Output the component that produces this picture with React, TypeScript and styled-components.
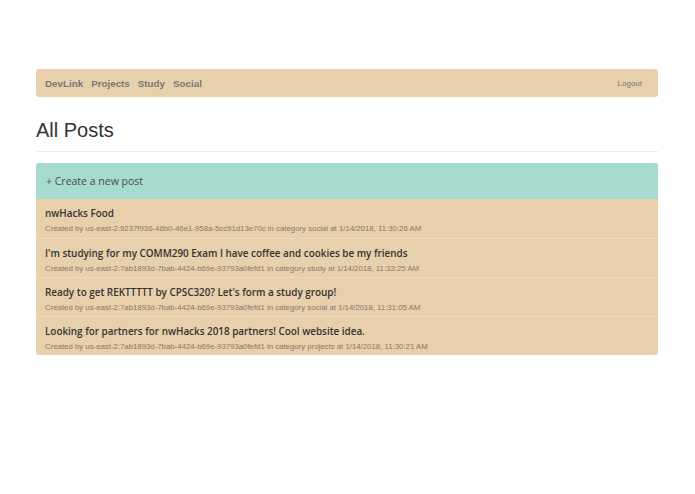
import React from "react";
import styled, { createGlobalStyle } from "styled-components";

const GlobalStyle = createGlobalStyle`
  body {
    margin: 0;
    background: #fff;
    font-family: "Liberation Sans", Arial, sans-serif;
    color: #333;
  }
`;

export const Page = styled.div`
  width: 622px;
  margin: 0 0 0 36px;
  padding-top: 69px;
`;

export const NavBar = styled.nav`
  display: flex;
  align-items: center;
  justify-content: space-between;
  height: 28px;
  padding: 0 16px 0 9px;
  background-color: #e8d0ac;
  border-radius: 3px;
  box-sizing: border-box;
`;

export const NavLinks = styled.ul`
  display: flex;
  gap: 8px;
  margin: 0;
  padding: 0;
  list-style: none;
`;

export const NavLink = styled.li`
  font-size: 9.8px;
  font-weight: bold;
  color: #777;
`;

export const Logout = styled.span`
  font-size: 8px;
  color: #777;
`;

export const Heading = styled.h1`
  margin: 21px 0 0;
  font-size: 20px;
  font-weight: normal;
  line-height: 24px;
  color: #333;
`;

export const Divider = styled.hr`
  margin: 9px 0 11px;
  border: 0;
  border-top: 1px solid #eee;
`;

export const PostList = styled.div`
  display: flex;
  flex-direction: column;
  border-radius: 3px;
  overflow: hidden;
  background-color: #e8d0ac;
`;

export const CreateRow = styled.div`
  display: flex;
  align-items: center;
  height: 36px;
  padding: 0 10px;
  background-color: #a6dcd0;
  font-family: "Open Sans", sans-serif;
  font-size: 10.5px;
  color: #4a4a4a;
`;

export const PostRow = styled.div<{ $first?: boolean }>`
  display: flex;
  flex-direction: column;
  height: 39px;
  padding: 8px 9px 0;
  box-sizing: border-box;
  border-top: ${(p) => (p.$first ? "none" : "1px solid #ecdbbf")};
`;

export const PostTitle = styled.div`
  font-family: "Open Sans", sans-serif;
  font-weight: 600;
  font-size: 9.9px;
  line-height: 13px;
  color: #333;
`;

export const PostMeta = styled.div`
  margin-top: 4px;
  font-size: 7.8px;
  line-height: 10px;
  color: #857a6b;
`;

const posts = [
  {
    title: "nwHacks Food",
    user: "us-east-2:9237f936-48b0-46e1-958a-5cc91d13e70c",
    category: "social",
    date: "1/14/2018, 11:30:26 AM",
  },
  {
    title: "I'm studying for my COMM290 Exam I have coffee and cookies be my friends",
    user: "us-east-2:7ab1893d-7bab-4424-b69e-93793a0fefd1",
    category: "study",
    date: "1/14/2018, 11:33:25 AM",
  },
  {
    title: "Ready to get REKTTTTT by CPSC320? Let's form a study group!",
    user: "us-east-2:7ab1893d-7bab-4424-b69e-93793a0fefd1",
    category: "social",
    date: "1/14/2018, 11:31:05 AM",
  },
  {
    title: "Looking for partners for nwHacks 2018 partners! Cool website idea.",
    user: "us-east-2:7ab1893d-7bab-4424-b69e-93793a0fefd1",
    category: "projects",
    date: "1/14/2018, 11:30:21 AM",
  },
];

export default function App() {
  return (
    <>
      <GlobalStyle />
      <Page>
        <NavBar>
          <NavLinks>
            <NavLink>DevLink</NavLink>
            <NavLink>Projects</NavLink>
            <NavLink>Study</NavLink>
            <NavLink>Social</NavLink>
          </NavLinks>
          <Logout>Logout</Logout>
        </NavBar>
        <Heading>All Posts</Heading>
        <Divider />
        <PostList>
          <CreateRow>+ Create a new post</CreateRow>
          {posts.map((post, i) => (
            <PostRow key={i} $first={i === 0}>
              <PostTitle>{post.title}</PostTitle>
              <PostMeta>
                Created by {post.user} in category {post.category} at {post.date}
              </PostMeta>
            </PostRow>
          ))}
        </PostList>
      </Page>
    </>
  );
}
